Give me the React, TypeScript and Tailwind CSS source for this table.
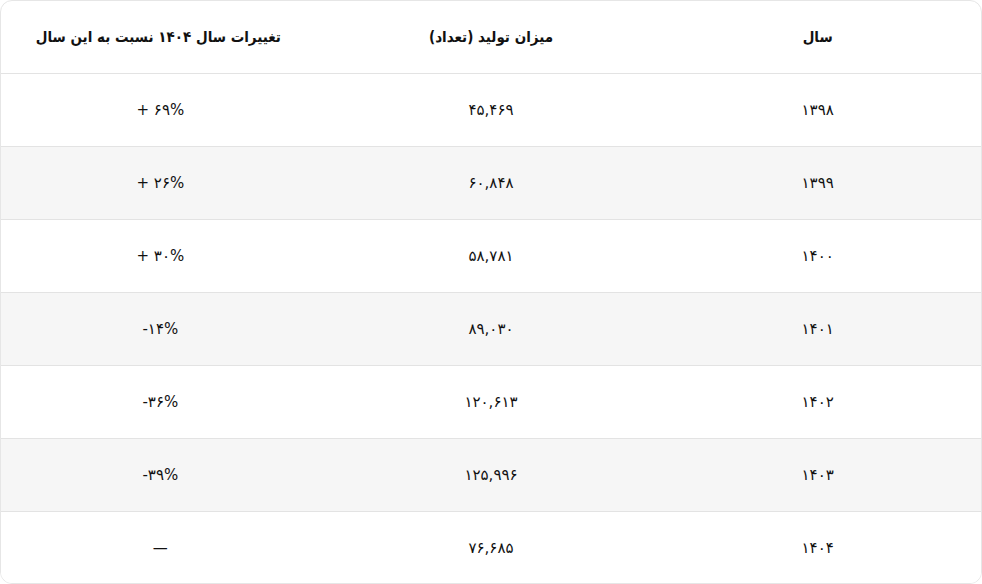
import React from "react";

const rows: [string, string, string][] = [
  ["۱۳۹۸", "۴۵,۴۶۹", "+ ۶۹%"],
  ["۱۳۹۹", "۶۰,۸۴۸", "+ ۲۶%"],
  ["۱۴۰۰", "۵۸,۷۸۱", "+ ۳۰%"],
  ["۱۴۰۱", "۸۹,۰۳۰", "-۱۴%"],
  ["۱۴۰۲", "۱۲۰,۶۱۳", "-۳۶%"],
  ["۱۴۰۳", "۱۲۵,۹۹۶", "-۳۹%"],
  ["۱۴۰۴", "۷۶,۶۸۵", "—"],
];

export default function App() {
  return (
    <div
      className="w-[982px] h-[584px] bg-white overflow-hidden"
      style={{ fontFamily: '"DejaVu Sans", "Noto Sans", sans-serif' }}
    >
      <div
        dir="rtl"
        className="h-[584px] rounded-[12px] border border-[#e6e6e6] overflow-hidden text-[#111111]"
      >
        <div className="grid grid-cols-3 h-[73px] items-center border-b border-[#e3e3e3] text-[15px] font-bold font-['DejaVu_Sans_Condensed',_'DejaVu_Sans',_sans-serif]">
          <div className="text-center">سال</div>
          <div className="text-center">میزان تولید (تعداد)</div>
          <div className="text-center pr-[12px]">تغییرات سال ۱۴۰۴ نسبت به این سال</div>
        </div>
        {rows.map((r, i) => (
          <div
            key={i}
            className={`grid grid-cols-3 h-[73px] items-center text-[15px] ${
              i % 2 === 1 ? "bg-[#f6f6f6]" : "bg-white"
            } ${i < rows.length - 1 ? "border-b border-[#e3e3e3]" : ""}`}
          >
            <div className="text-center">{r[0]}</div>
            <div className="text-center">{r[1]}</div>
            <div className="text-center pr-[8px]">
              <span dir="ltr">{r[2]}</span>
            </div>
          </div>
        ))}
      </div>
    </div>
  );
}
